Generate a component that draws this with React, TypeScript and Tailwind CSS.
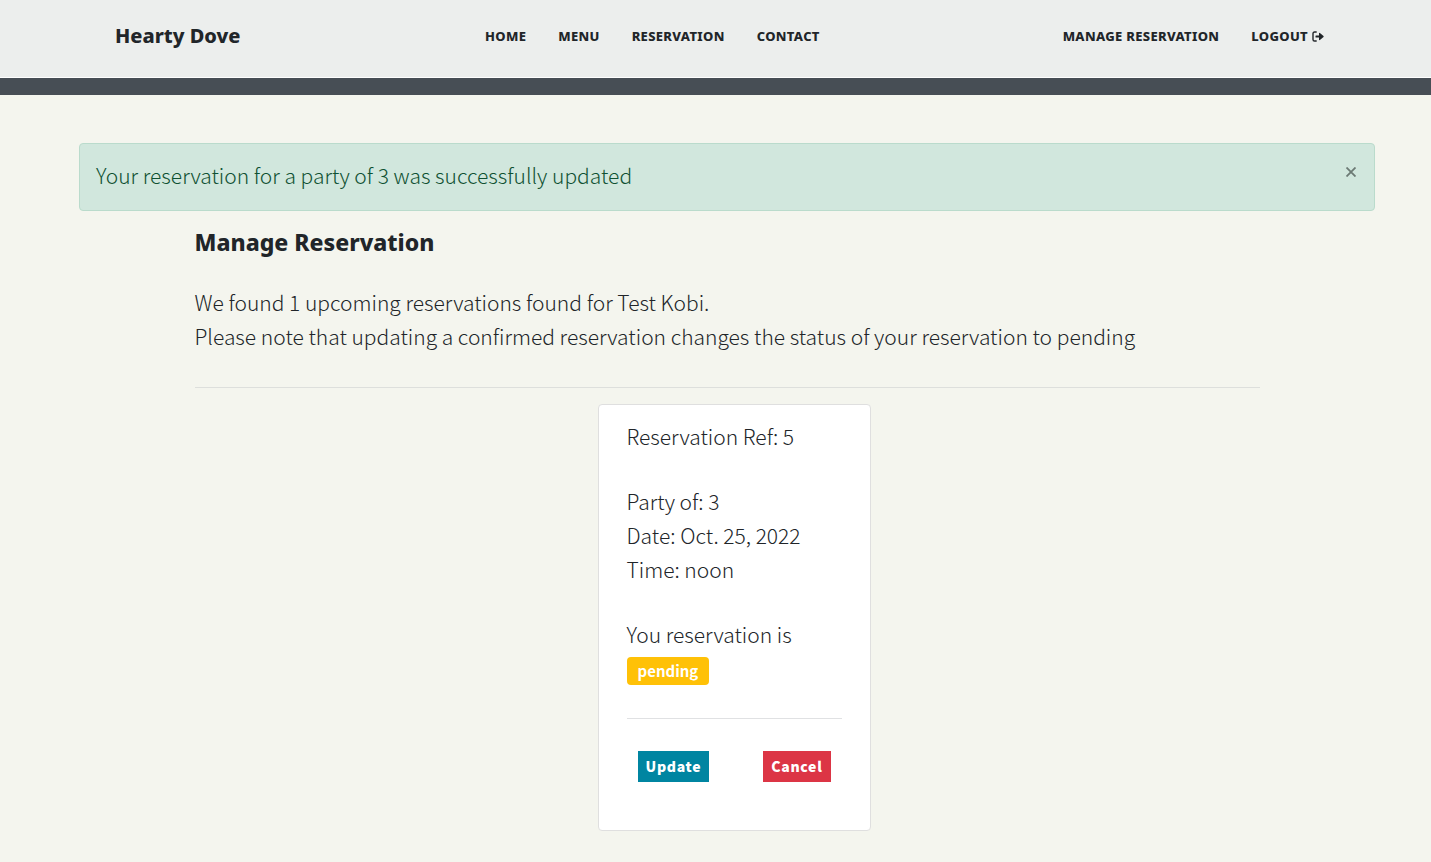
const links = ["Home", "Menu", "Reservation", "Contact"];

const navLink = "text-[13px] leading-5 font-extrabold uppercase tracking-wide";

function LogoutIcon() {
  return (
    <svg viewBox="0 0 12 11" className="h-[11px] w-3" aria-hidden="true">
      <path
        d="M4.2 1H2.6Q1 1 1 2.6V8.4Q1 10 2.6 10H4.2"
        fill="none"
        stroke="currentColor"
        strokeWidth="1.4"
        strokeLinecap="round"
      />
      <path
        d="M4 4.4H7V2.2Q7.2 1.6 7.9 2L11.5 5.1Q11.9 5.5 11.5 5.9L7.9 9Q7.2 9.4 7 8.8V6.6H4Q3.5 6.5 3.5 6V5Q3.5 4.5 4 4.4Z"
        fill="currentColor"
      />
    </svg>
  );
}

function Header() {
  return (
    <header className="border-b border-white bg-[#eceeed] font-['Noto_Sans',sans-serif]">
      <div className="mx-auto flex max-w-[1321px] items-center pt-[21px] pr-[52px] pb-[26px] pl-[60px]">
        <a href="#home" className="w-[370px] text-xl leading-[30px] font-extrabold">
          Hearty Dove
        </a>
        <nav aria-label="Main" className="flex flex-1 items-center justify-between">
          <ul className="flex gap-8">
            {links.map((label) => (
              <li key={label} className="flex">
                <a href={"#" + label.toLowerCase()} className={navLink}>
                  {label}
                </a>
              </li>
            ))}
          </ul>
          <ul className="flex gap-8">
            <li className="flex">
              <a href="#manage" className={navLink}>
                Manage Reservation
              </a>
            </li>
            <li className="flex">
              <a href="#logout" className={navLink + " flex items-center gap-1"}>
                Logout
                <LogoutIcon />
              </a>
            </li>
          </ul>
        </nav>
      </div>
    </header>
  );
}

function Alert() {
  return (
    <div
      role="status"
      className="flex items-start justify-between rounded border border-[#badbcc] bg-[#d1e7dd] pt-[14px] pr-[11px] pb-[18px] pl-4 text-[#0f5132]"
    >
      <p>Your reservation for a party of 3 was successfully updated</p>
      <button
        type="button"
        aria-label="Close"
        className="flex h-7 w-6 items-center justify-center text-[#6c7a74]"
      >
        <svg viewBox="0 0 10 10" className="size-[10px]" fill="none" stroke="currentColor" strokeWidth="1.8">
          <path d="M0.5 0.5 9.5 9.5M9.5 0.5 0.5 9.5" />
        </svg>
      </button>
    </div>
  );
}

function ReservationCard() {
  return (
    <article className="w-[273px] rounded border border-[#dfdfdf] bg-white px-7 pt-[14px] pb-12">
      <p>Reservation Ref: 5</p>
      <div className="mt-[31px]">
        <p>Party of: 3</p>
        <p>Date: Oct. 25, 2022</p>
        <p>Time: noon</p>
      </div>
      <p className="mt-[31px]">You reservation is</p>
      <span className="mt-[6px] flex h-7 w-fit items-center rounded bg-[#ffc107] px-[11px] text-[15px] leading-4 font-bold text-white">
        pending
      </span>
      <hr className="mt-[33px] border-[#e0e1e3]" />
      <div className="mt-8 flex justify-between px-[11px] text-sm leading-[21px] font-black tracking-wider text-white">
        <button type="button" className="bg-[#0085a1] px-2 py-[5px]">
          Update
        </button>
        <button type="button" className="bg-[#dc3545] px-2 py-[5px]">
          Cancel
        </button>
      </div>
    </article>
  );
}

export default function App() {
  return (
    <div className="min-h-screen bg-[#f4f5ee] font-['Noto_Sans_CJK_SC',sans-serif] text-[21px] leading-[34px] font-light text-[#212529]">
      <Header />
      <div className="h-[17px] bg-[#474e55]" />
      <main className="mx-auto max-w-[1321px] pt-12 pr-px pb-8 pl-6">
        <Alert />
        <div className="mx-auto max-w-[1065px] pt-[15px]">
          <h1 className="font-['Noto_Sans',sans-serif] text-[23px] leading-8 font-extrabold">
            Manage Reservation
          </h1>
          <div className="mt-[27px]">
            <p>We found 1 upcoming reservations found for Test Kobi.</p>
            <p>Please note that updating a confirmed reservation changes the status of your reservation to pending</p>
          </div>
          <hr className="mt-[34px] border-[#dddfdc]" />
          <div className="mt-4 flex justify-center pl-[14px]">
            <ReservationCard />
          </div>
        </div>
      </main>
    </div>
  );
}
